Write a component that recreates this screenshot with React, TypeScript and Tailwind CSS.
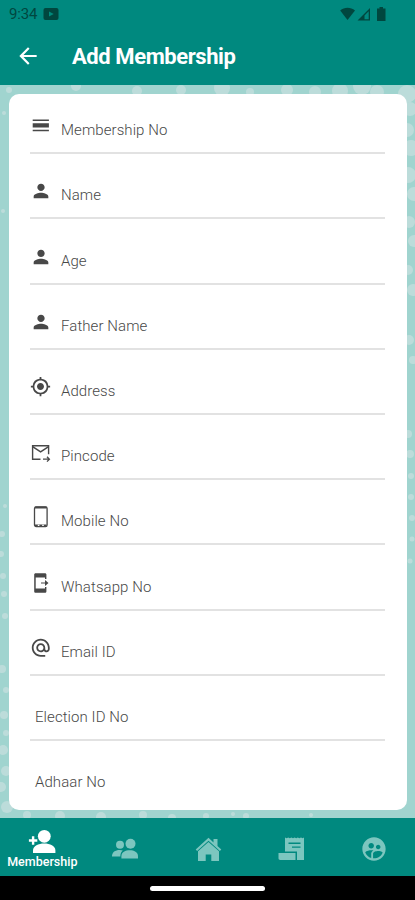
import type { ReactNode } from "react";
import {
  MdAlternateEmail,
  MdArrowBack,
  MdGpsFixed,
  MdPerson,
  MdSupervisedUserCircle,
} from "react-icons/md";

interface Field {
  label: string;
  icon?: ReactNode;
}

const LinesIcon = () => (
  <svg width="22" height="22" viewBox="0 0 22 22" fill="currentColor">
    <path d="M2.700 4.500h16.200v1.400H2.700zM2.700 8.200h16.200v4.200H2.700zM2.700 14.800h16.200v1.500H2.700z" />
  </svg>
);

const InboxIcon = () => (
  <svg width="21" height="21" viewBox="0 0 21 21" fill="none" stroke="currentColor">
    <path d="M10.500 17.300H2.600V3.800h16v8.500" strokeWidth="1.400" />
    <path d="m2.600 4.600 8 5.200 8-5.200" strokeWidth="1.500" />
    <path d="M13 17.200h6M17 14.800l2.400 2.400L17 19.600" strokeWidth="1.300" />
  </svg>
);

const PhoneIcon = () => (
  <svg width="22" height="24" viewBox="0 0 22 24" fill="none">
    <rect x="4.500" y="2" width="12.600" height="19.500" rx="1.600" stroke="currentColor" strokeWidth="1.300" />
    <path d="M5 2.600h11.600M5 20.400h11.600" stroke="currentColor" strokeWidth="2" />
    <path d="M7.800 20.300h1.600M12.200 20.300h1.600" stroke="#ffffff" strokeWidth="1.200" />
  </svg>
);

const SendMobileIcon = () => (
  <svg width="21" height="22" viewBox="0 0 21 22" fill="currentColor">
    <path d="M5.600 1.200h9.400c.8 0 1.400.6 1.400 1.400V7h-1.400V5.500H5.700v11h9.300V15h1.400v4.400c0 .8-.6 1.400-1.400 1.400H5.600c-.8 0-1.400-.6-1.400-1.400V2.600c0-.8.6-1.400 1.400-1.400z" />
    <path d="M11 10.400h4V8.100l3.500 2.900-3.500 2.900v-2.300h-4z" />
  </svg>
);

const fields: Field[] = [
  { label: "Membership No", icon: <LinesIcon /> },
  { label: "Name", icon: <MdPerson size={22} /> },
  { label: "Age", icon: <MdPerson size={22} /> },
  { label: "Father Name", icon: <MdPerson size={22} /> },
  { label: "Address", icon: <MdGpsFixed size={21} /> },
  { label: "Pincode", icon: <InboxIcon /> },
  { label: "Mobile No", icon: <PhoneIcon /> },
  { label: "Whatsapp No", icon: <SendMobileIcon /> },
  { label: "Email ID", icon: <MdAlternateEmail size={21.5} /> },
  { label: "Election ID No" },
  { label: "Adhaar No" },
];

// x, y, radius
const dots = [
  [9, 5, 3], [76, 1, 5], [137, 6, 5], [181, 5, 5], [222, 3, 8], [250, 7, 4],
  [287, 5, 6], [315, 7, 6], [340, 6, 8], [362, 1, 9], [377, 7, 7], [407, 9, 9],
  [410, 24, 7], [407, 45, 7], [411, 63, 8], [408, 90, 8], [414, 109, 7],
  [409, 137, 6], [414, 156, 6], [408, 185, 5], [413, 205, 6], [409, 255, 5],
  [413, 275, 4], [408, 349, 4], [410, 369, 4], [411, 391, 3], [411, 412, 3],
  [412, 433, 3], [412, 454, 2.5], [410, 476, 2.5],
  [4, 28, 2], [3, 126, 2], [5, 421, 2], [2, 449, 3], [1, 469, 3], [3, 491, 3],
  [4, 509, 3], [5, 531, 3], [2, 584, 4], [6, 605, 3], [4, 630, 4], [6, 648, 3],
  [3, 665, 5], [6, 686, 5], [1, 702, 5], [7, 722, 6], [27, 730, 4],
  [60, 731, 5], [101, 732, 5], [143, 730, 4], [172, 733, 4], [206, 731, 3],
  [233, 729, 2], [246, 731, 3], [311, 730, 2],
];

const AddPersonIcon = () => (
  <svg width="28" height="25" viewBox="0 0 28 25" fill="currentColor">
    <circle cx="16.300" cy="7.300" r="6.400" />
    <path d="M5 24v-2.600c0-4.600 5.500-6.900 11.200-6.900s11.200 2.300 11.200 6.900V24z" />
    <path d="M3.900 7.300h2.400v3h3v2.400h-3v3H3.900v-3h-3v-2.400h3z" />
  </svg>
);

const GroupIcon = () => (
  <svg width="27" height="22" viewBox="0 0 27 22" fill="currentColor">
    <circle cx="8" cy="6.8" r="4" />
    <path d="M0 18.5c0-4.5 3.2-6.6 7.6-6.6 1.3 0 2.3.2 3.2.6-1.5 1.2-2.4 3-2.5 6H0z" />
    <circle cx="18.5" cy="5.8" r="5" />
    <path d="M9.4 20.5v-2.3c0-4.1 4-6 8.3-6s8.3 1.9 8.3 6v2.3H9.4z" />
  </svg>
);

const HomeIcon = () => (
  <svg width="27" height="25" viewBox="0 0 27 25" fill="currentColor">
    <path d="M13.5.8.7 12.4l1.4 1.5L13.5 3.8l11.4 10.1 1.4-1.5-3.8-3.5V2h-4v3.4z" />
    <path d="M13.5 5 3 14.3V24h7.700v-6.500h5.600V24H24v-9.700z" />
  </svg>
);

const ReceiptIcon = () => (
  <svg width="27" height="24" viewBox="0 0 27 24" fill="currentColor">
    <path
      fillRule="evenodd"
      d="M7 .5 8.6 1.3 10.2.5l1.6.8 1.6-.8 1.6.8 1.6-.8 1.6.8 1.6-.8 1.6.8L23 .5l1.6.8L26 .5V23h-7v-8.5H7zM10.500 5.400v1.500h12V5.400zm3.500 4v1.400h8.500V9.400z"
    />
    <path d="M.5 16h17v7H2.2C1.2 23 .5 22.3.5 21.3z" />
  </svg>
);

const StatusBar = () => (
  <div className="flex h-7 items-center justify-between pl-[9px] pr-7 text-[#00473f]">
    <div className="flex items-center gap-1.5">
      <span className="text-[15px] leading-none tracking-[-0.2px]">9:34</span>
      <svg width="16" height="12" viewBox="0 0 16 12">
        <rect x="0.5" width="15" height="12" rx="2" fill="currentColor" />
        <path d="m6 3.5 4.7 2.5L6 8.5z" fill="#00897b" />
      </svg>
    </div>
    <svg width="48" height="16" viewBox="0 0 48 16" fill="currentColor">
      <path d="M8.500 14 1.200 4.600C5.300.8 11.700.8 16 4.600z" />
      <path fillRule="evenodd" d="M18.500 14.500 31 2v12.500zM25.500 13.200h4.200V5.200l-4.200 4.200z" />
      <path d="M40.500 1h3.500v1.500h2.500v12.500h-8.500V2.500h2.500z" />
    </svg>
  </div>
);

const FieldRow = ({ label, icon }: Field) => (
  <div className="flex h-[65.2px] shrink-0 items-end border-b-2 border-[#e2e2e2] pb-[13px] last:border-transparent">
    {icon ? (
      <span className="mb-[3px] flex h-5 w-[31px] items-center text-[#484848]">{icon}</span>
    ) : (
      <span className="w-[5px]" />
    )}
    <span className="text-[15px] font-light leading-[18px] tracking-[0.08px] text-[#484848]">{label}</span>
  </div>
);

const App = () => {
  return (
    <div className="flex h-[900px] w-[415px] flex-col overflow-hidden bg-black font-['Roboto',sans-serif]">
      <header className="h-[85px] shrink-0 bg-[#00897f]">
        <StatusBar />
        <div className="flex h-14 items-center pl-[15px]">
          <MdArrowBack size={26} className="-mt-px text-white" />
          <h1 className="ml-[31px] pt-0.5 text-[22px] font-bold leading-7 tracking-[-0.42px] text-white">
            Add Membership
          </h1>
        </div>
      </header>

      <main className="relative h-[733px] shrink-0 bg-[#a0d4cf] pl-[9px] pr-2 pt-[9px]">
        <svg className="absolute inset-0" width="415" height="733" viewBox="0 0 415 733">
          {dots.map(([x, y, r]) => (
            <circle key={`${x}-${y}`} cx={x} cy={y} r={r} fill="#bcdcda" />
          ))}
        </svg>
        <section className="relative flex h-[716px] flex-col overflow-hidden rounded-[10px] bg-white pl-[21px] pr-[22px]">
          <div className="-mt-[5px] flex flex-col">
            {fields.map((field) => (
              <FieldRow key={field.label} {...field} />
            ))}
          </div>
        </section>
      </main>

      <nav className="grid h-[58px] shrink-0 grid-cols-5 items-center bg-[#00897f] pl-0.5 pt-1 text-[#7cc6bf]">
        <div className="flex flex-col items-center pr-0.5 text-white">
          <AddPersonIcon />
          <span className="text-[12.5px] font-medium leading-[15px]">Membership</span>
        </div>
        <div className="flex justify-center">
          <GroupIcon />
        </div>
        <div className="flex justify-center">
          <HomeIcon />
        </div>
        <div className="flex justify-center">
          <ReceiptIcon />
        </div>
        <div className="flex justify-center">
          <MdSupervisedUserCircle size={28} />
        </div>
      </nav>

      <div className="flex h-6 shrink-0 items-center justify-center">
        <div className="h-[5px] w-[115px] rounded-full bg-white" />
      </div>
    </div>
  );
};

export default App;
